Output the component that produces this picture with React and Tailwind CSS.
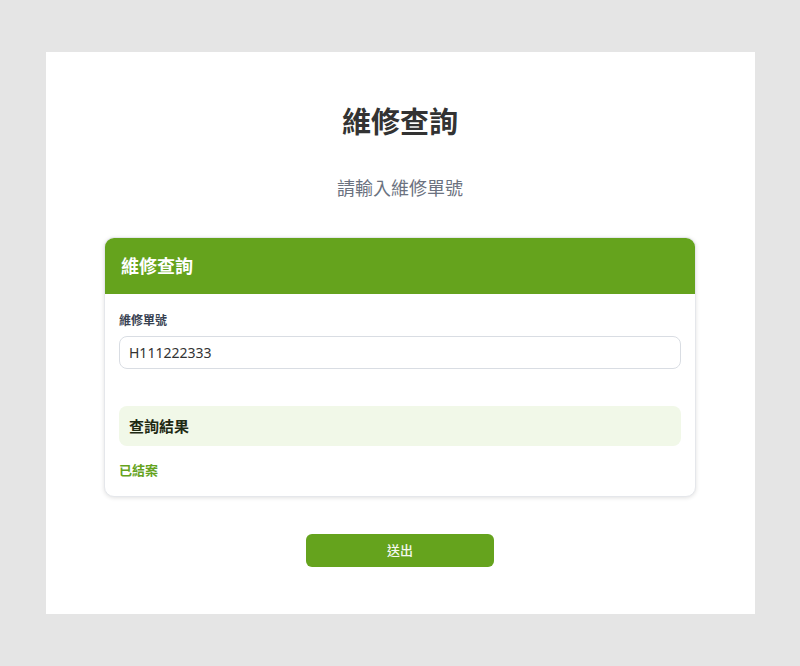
export default function App() {
  const font = { fontFamily: '"Noto Sans", "Noto Sans CJK TC", sans-serif' };
  return (
    <div className="h-screen w-full bg-[#e5e5e5] flex items-center justify-center" style={font}>
      <div className="w-[709px] h-[562px] bg-white flex flex-col items-center">
        <h1 className="mt-[50px] text-[29px] leading-[40px] font-bold text-[#333333]">維修查詢</h1>
        <p className="mt-[34px] text-[18px] leading-[24px] text-[#6b7280]">請輸入維修單號</p>

        <div className="mt-[37px] w-[592px] rounded-[10px] bg-white shadow-[0_1px_4px_rgba(0,0,0,0.12)] border border-[#e5e7eb] overflow-hidden">
          <div className="h-[56px] bg-[#65a31d] flex items-center px-[16px]">
            <span className="text-[18px] font-bold text-white">維修查詢</span>
          </div>
          <div className="px-[14px] pt-[18px] pb-[17px]">
            <label className="block text-[12px] leading-[18px] font-bold text-[#374151]">維修單號</label>
            <div className="mt-[6px] h-[33px] rounded-[8px] border border-[#d9dde3] flex items-center px-[9px] text-[14px] text-[#333333]">
              H111222333
            </div>
            <div className="mt-[37px] h-[40px] rounded-[8px] bg-[#f1f8e8] flex items-center px-[10px]">
              <span className="text-[15px] font-bold text-[#1f2a14]">查詢結果</span>
            </div>
            <div className="mt-[15px] text-[13px] leading-[18px] font-bold text-[#65a31d]">已結案</div>
          </div>
        </div>

        <button className="mt-[37px] w-[188px] h-[33px] rounded-[6px] bg-[#65a31d] text-[#f4f8ee] text-[13px] font-medium">
          送出
        </button>
      </div>
    </div>
  );
}
